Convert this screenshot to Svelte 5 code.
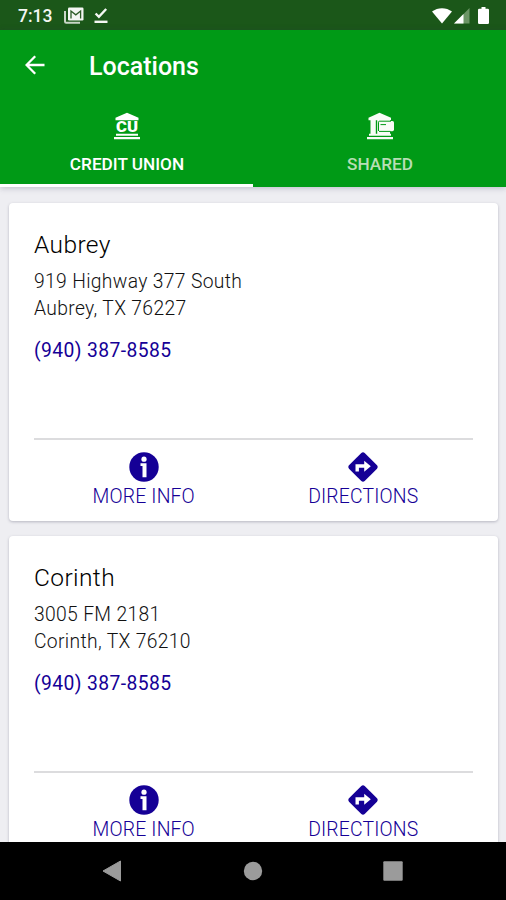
<script lang="ts">
  let activeTab = 'cu';

  const locations = [
    { name: 'Aubrey', street: '919 Highway 377 South', city: 'Aubrey, TX 76227', phone: '(940) 387-8585' },
    { name: 'Corinth', street: '3005 FM 2181', city: 'Corinth, TX 76210', phone: '(940) 387-8585' }
  ];
</script>

<div class="phone">
  <div class="statusBar">
    <span class="clock">7:13</span>
    <svg class="mail" width="20" height="17" viewBox="0 0 20 17">
      <path d="M1 4v10.5q0 1.2 1.2 1.2H16" fill="none" stroke="#c9d6c7" stroke-width="2" />
      <rect x="4" y="0.5" width="15.5" height="13" rx="1.2" fill="#f4f7f3" />
      <path d="M7 11.5V4l4.8 3.8L16.6 4v7.5" fill="none" stroke="#2b5a25" stroke-width="1.3" />
    </svg>
    <svg class="done" width="14" height="16" viewBox="0 0 14 16">
      <path d="M1.6 5.500l3.300 3.300L12.200 1" fill="none" stroke="#f4f7f3" stroke-width="2.400" />
      <path d="M0.500 13.800h13" stroke="#f4f7f3" stroke-width="2.400" />
    </svg>
    <div class="signals">
      <svg width="20" height="16" viewBox="0 0 20 16">
        <path d="M0 3.600C5.800-.9 14.200-.9 20 3.600L10 15.600z" fill="#fff" />
      </svg>
      <svg class="cell" width="16" height="16" viewBox="0 0 16 16">
        <path d="M15.500 0v15.500H0z" fill="#6c9566" />
        <path d="M9.500 6v9.500H0z" fill="#fff" />
      </svg>
      <svg class="battery" width="11" height="17" viewBox="0 0 11 17">
        <path d="M3.500 0h4v1.700h2.300q1.200 0 1.200 1.200v12.900q0 1.200-1.200 1.200H1.200Q0 17 0 15.800V2.900q0-1.200 1.200-1.200h2.300z" fill="#fff" />
      </svg>
    </div>
  </div>

  <header>
    <div class="titleBar">
      <svg width="20" height="20" viewBox="0 0 20 20">
        <path d="M19.500 10H2M10.200 1.200L1.500 10l8.700 8.800" fill="none" stroke="#fff" stroke-width="2.300" />
      </svg>
      <h1>Locations</h1>
    </div>
    <div class="tabs">
      <button class:selected={activeTab === 'cu'} on:click={() => (activeTab = 'cu')}>
        <svg width="28" height="28" viewBox="0 0 28 28">
          <path d="M14 .8L25.500 5.800v2.400h-23V5.800z" fill="#fff" />
          <text x="3" y="20.300" textLength="22" lengthAdjust="spacingAndGlyphs">CU</text>
          <path d="M3 21.800h22v2H3zM1 24.900h26v2.400H1z" fill="#fff" />
        </svg>
        <span>CREDIT UNION</span>
      </button>
      <button class:selected={activeTab === 'shared'} on:click={() => (activeTab = 'shared')}>
        <svg width="28" height="28" viewBox="0 0 28 28">
          <path d="M13.500 .8L25 5.800v2.400H2.500V5.800z" fill="#f8fcf7" />
          <path d="M4.500 8h5.300v14H4.500zM11.200 8h12.800v14H11.200z" fill="#f8fcf7" />
          <rect x="12.500" y="9" width="15.500" height="10.200" rx="1.600" fill="#f8fcf7" />
          <path d="M12.500 19V10.200q0-1 1-1H25M14.500 12.600h5.500M13 19.400h11.500" fill="none" stroke="#009a16" stroke-width="1" />
          <path d="M3 21.800h22v2H3zM1 24.900h26v2.400H1z" fill="#f8fcf7" />
        </svg>
        <span>SHARED</span>
      </button>
    </div>
  </header>

  <main>
    {#each locations as place}
      <section class="card">
        <h2>{place.name}</h2>
        <p>{place.street}<br />{place.city}</p>
        <a class="tel" href="tel:9403878585">{place.phone}</a>
        <div class="actions">
          <button>
            <svg width="30" height="30" viewBox="0 0 30 30">
              <circle cx="15" cy="15" r="14.700" fill="#150096" />
              <circle cx="15" cy="7.200" r="2.600" fill="#fff" />
              <path d="M11.500 11.300h6v14h-4V13.900h-2z" fill="#fff" />
            </svg>
            <span class="info">MORE INFO</span>
          </button>
          <button>
            <svg width="30" height="30" viewBox="0 0 30 30">
              <path d="M13.300 1q1.700-1.400 3.400 0L29 13.300q1.400 1.700 0 3.400L16.700 29q-1.700 1.400-3.400 0L1 16.700q-1.400-1.700 0-3.400z" fill="#150096" />
              <path d="M7.500 19.500v-7.300h8.700V8.800l6.600 5.500-6.600 5.500v-4h-5.300v3.700z" fill="#fff" />
            </svg>
            <span class="directions">DIRECTIONS</span>
          </button>
        </div>
      </section>
    {/each}
  </main>

  <nav>
    <svg width="20" height="22" viewBox="0 0 20 22"><path d="M18.500 1v20L1 11z" fill="#9b9b9b" stroke="#9b9b9b" /></svg>
    <svg width="20" height="20" viewBox="0 0 20 20"><circle cx="10" cy="10" r="9.200" fill="#9b9b9b" /></svg>
    <svg width="20" height="20" viewBox="0 0 20 20"><rect x=".3" y=".3" width="19.400" height="19.400" rx="1" fill="#9b9b9b" /></svg>
  </nav>
</div>

<style>
  :global(body) {
    margin: 0;
    overflow: hidden;
  }

  .phone {
    width: 506px;
    height: 900px;
    display: flex;
    flex-direction: column;
    overflow: hidden;
    background: #eeeef2;
    font-family: Roboto, sans-serif;
  }
  svg {
    display: block;
    flex: none;
  }
  button {
    border: 0;
    padding: 0;
    background: none;
    font-family: inherit;
  }

  .statusBar {
    flex: none;
    height: 30px;
    display: flex;
    align-items: center;
    box-sizing: border-box;
    padding: 1px 17px 0 18px;
    background: #1b5719;
    color: #f4f7f3;
  }
  .clock {
    width: 46px;
    font-size: 17.500px;
    font-weight: 500;
    line-height: 30px;
  }
  .done {
    margin-left: 10px;
  }
  .signals {
    display: flex;
    align-items: center;
    margin-left: auto;
  }
  .cell {
    margin-left: 2px;
  }
  .battery {
    margin-left: 8px;
  }

  header {
    flex: none;
    height: 157px;
    background: #009a16;
    box-shadow: 0 1px 6px rgba(40, 40, 80, 0.25);
    z-index: 1;
  }
  .titleBar {
    display: flex;
    align-items: center;
    height: 70px;
    padding-left: 25px;
    gap: 44px;
  }
  h1 {
    margin: 2px 0 0;
    color: #fff;
    font-size: 25px;
    font-weight: 500;
  }
  .tabs {
    display: flex;
    height: 87px;
  }
  .tabs button {
    flex: 1;
    display: flex;
    flex-direction: column;
    align-items: center;
    box-sizing: border-box;
    padding-top: 12px;
    border-bottom: 3px solid transparent;
    color: #b7deb5;
    font-size: 17.200px;
    font-weight: 500;
  }
  .tabs button.selected {
    color: #fff;
    border-bottom-color: #fff;
  }
  .tabs span {
    margin-top: 14px;
    padding-left: 1px;
    line-height: 20px;
  }
  text {
    fill: #fff;
    font-size: 15px;
    font-weight: 900;
  }

  main {
    flex: 1;
    min-height: 0;
    display: flex;
    flex-direction: column;
    gap: 15px;
    padding: 16px 8px 0 9px;
    overflow: hidden;
  }
  .card {
    flex: none;
    height: 317.500px;
    box-sizing: border-box;
    padding: 25px 25px 0;
    border-radius: 4px;
    background: #fff;
    box-shadow: 0 1px 3px rgba(40, 40, 70, 0.28);
  }
  h2 {
    margin: 0;
    color: #000;
    font-size: 24.500px;
    font-weight: 300;
    line-height: 34px;
    letter-spacing: 0.400px;
  }
  p {
    margin: 6px 0 0;
    color: #111;
    font-size: 19.300px;
    font-weight: 300;
    line-height: 27px;
    letter-spacing: 0.340px;
  }
  .tel {
    display: block;
    margin-top: 15px;
    color: #150096;
    font-size: 19.300px;
    line-height: 27px;
    letter-spacing: 0.400px;
    text-decoration: none;
  }
  .actions {
    display: flex;
    margin-top: 74px;
    border-top: 2px solid #dcdcde;
  }
  .actions button {
    flex: 1;
    display: flex;
    flex-direction: column;
    align-items: center;
    padding-top: 12px;
    color: #150096;
    font-size: 19.400px;
    font-weight: 300;
  }
  .actions span {
    margin-top: 3px;
    line-height: 24px;
    letter-spacing: 0.150px;
  }

  nav {
    flex: none;
    height: 58px;
    display: flex;
    align-items: center;
    justify-content: space-between;
    box-sizing: border-box;
    padding: 0 103px 0 102px;
    background: #000;
  }
</style>
